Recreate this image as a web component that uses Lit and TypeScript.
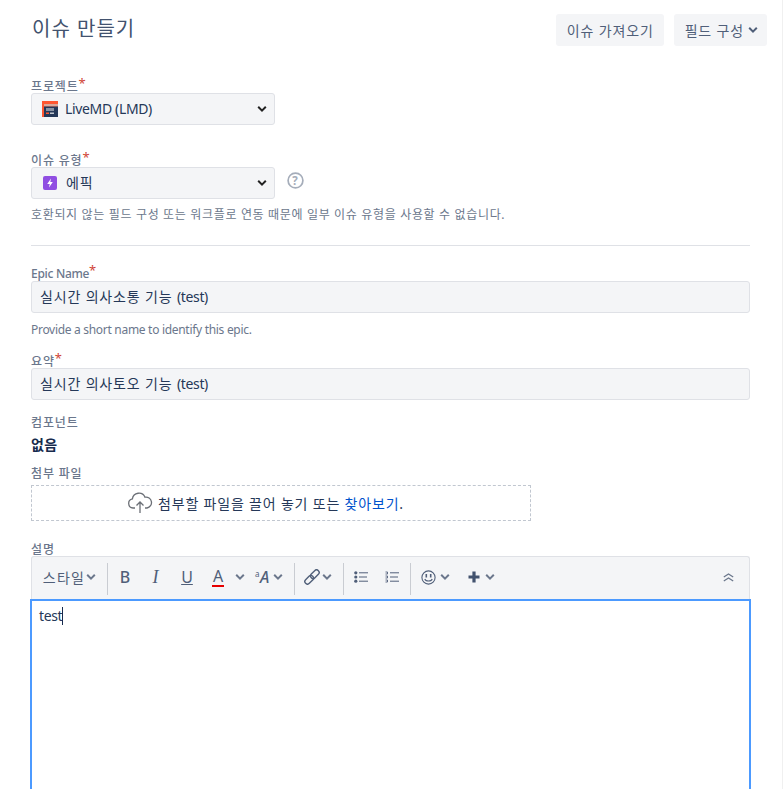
import { LitElement, html, css } from "lit";
import { customElement } from "lit/decorators.js";

const chev = () => html`<svg class="chev" width="10" height="8" viewBox="0 0 10 8"><path d="M1.2 1.8 5 5.6l3.8-3.8" fill="none" stroke="currentColor" stroke-width="2"/></svg>`;

@customElement("app-root")
export class AppRoot extends LitElement {
  static styles = css`
    :host { display: block; height: 789px; overflow: hidden; box-sizing: border-box; background: #fff; border-right: 1px solid #f0f0f0;
      font-family: "Noto Sans", "Noto Sans CJK KR", sans-serif; font-size: 14px; color: #172b4d; letter-spacing: .06em; }
    .lat { letter-spacing: -.025em; }
    .page { padding: 14px 15px 0 31px; }
    .head { display: flex; align-items: flex-start; height: 32px; }
    h1 { margin: 0; flex: 1; font-size: 20px; font-weight: 400; line-height: 30px; color: #42526e; letter-spacing: .05em; padding-left: 1px; }
    .btn { height: 32px; box-sizing: border-box; display: flex; align-items: center; gap: 5px; padding: 0 10px 0 11px; border-radius: 3px; background: #f4f5f7; color: #505f79; font-size: 14px; margin-left: 10px; }
    .btn:last-child { padding-right: 9px; gap: 4px; }
    .form { width: 719px; }
    label { display: block; height: 16px; font-size: 12px; line-height: 20px; font-weight: 500; color: #6b778c; }
    label.up { line-height: 18px; }
    label b { color: #d04437; font-weight: 400; font-size: 13px; line-height: 10px; vertical-align: 3px; letter-spacing: 0; }
    .select, .input { height: 32px; box-sizing: border-box; background: #f4f5f7; border: 1px solid #dfe1e6; border-radius: 3px; display: flex; align-items: center; }
    .select { width: 244px; padding: 0 7px 0 10px; gap: 7px; }
    .select span { flex: 1; font-size: 14px; color: #253858; line-height: 18px; padding-bottom: 1px; }
    .select .chev { color: #222; }
    .epic { margin: 0 2px 0 1px; }
    .input { padding: 0 8px 3px; color: #253858; }
    .row { display: flex; align-items: center; gap: 12px; }
    .help { color: #a5adba; display: block; margin-top: -5px; }
    .note { font-size: 12px; line-height: 16px; color: #6b778c; letter-spacing: .055em; }
    .note.lat { letter-spacing: -.025em; }
    .gap7 { margin-top: 8px; }
    .gap8 { margin-top: 9px; }
    hr { border: 0; border-top: 1px solid #dfe1e6; margin: 22px 0 19px; }
    .m31 { margin-top: 31px; } .m26 { margin-top: 26px; } .m13 { margin-top: 14px; } .m14 { margin-top: 13px; } .m11 { margin-top: 9px; } .m19 { margin-top: 19px; }
    .none { font-weight: 600; line-height: 20px; margin-top: 6px; color: #172b4d; letter-spacing: .02em; }
    .drop { width: 500px; height: 36px; box-sizing: border-box; border: 1px dashed #c1c7d0; display: flex; align-items: center; padding-left: 95px; gap: 5px; font-size: 14px; color: #253858; margin-top: 5px; letter-spacing: .058em; }
    .drop a { color: #0052cc; }
    .toolbar { height: 44px; box-sizing: border-box; background: #f4f5f7; border: 1px solid #dfe1e6; border-bottom: 0; border-radius: 3px 3px 0 0; display: flex; align-items: center; color: #505f79; }
    .sep { width: 1px; height: 32px; background: #c9ccd2; flex: none; }
    .t { display: flex; align-items: center; justify-content: center; color: #505f79; flex: none; margin-top: -3px; }
    .t .chev { color: #6b778c; }
    .editor { height: 220px; box-sizing: border-box; border: 2px solid #4c9aff; margin: -1px -1px 0; padding: 5px 7px; line-height: 20px; color: #253858; letter-spacing: -.025em; }
    .caret { display: inline-block; width: 1px; height: 18px; background: #172b4d; vertical-align: -4px; }
    .bold, .under, .acol { font-size: 16px; line-height: 18px; letter-spacing: 0; }
    .bold { font-weight: 500; }
    .ital { font-style: italic; font-family: "Liberation Serif", serif; font-size: 18px; }
    .under { text-decoration: underline; }
    .acol { border-bottom: 2px solid #e60000; line-height: 17px; padding: 0 1px; }
    .styl { width: 75px; gap: 1px; font-size: 14px; letter-spacing: .09em; }
    .wb { width: 34px; } .wi { width: 28px; } .wu { width: 34px; } .wa { width: 28px; } .wc { width: 16px; }
    .waa { width: 46px; padding-left: 7px; box-sizing: border-box; justify-content: flex-start; letter-spacing: 0; }
    .aa { display: flex; width: 18px; line-height: 16px; }
    .tinyA { font-size: 8px; line-height: 10px; width: 5px; }
    .bigA { font-size: 16px; font-style: italic; font-weight: 500; }
    .wl { width: 48px; padding-left: 9px; box-sizing: border-box; justify-content: flex-start; gap: 2px; }
    .w32 { width: 34px; } .w30 { width: 28px; } .w4 { width: 4px; }
    .w49 { width: 49px; gap: 4px; }
    .w44 { width: 42px; gap: 5px; }
    .grow { flex: 1; }
    .w40 { width: 40px; padding-right: 1px; box-sizing: border-box; }
    .q { font-size: 11.5px; font-weight: 700; font-family: "Noto Sans", sans-serif; fill: currentColor; }
  `;

  render() {
    return html`<div class="page">
      <div class="head"><h1>이슈 만들기</h1>
        <div class="btn">이슈 가져오기</div>
        <div class="btn">필드 구성 ${chev()}</div>
      </div>
      <div class="form">
        <label class="m31">프로젝트<b>*</b></label>
        <div class="select">
          <svg width="16" height="16" viewBox="0 0 16 16"><rect width="16" height="16" fill="#ff5630"/><rect x="2" y="3" width="14" height="2.5" fill="#d9a89a"/><rect x="2" y="5.5" width="14" height="10.5" fill="#253858"/><rect x="4" y="7" width="8" height="3" fill="#8993a4"/><rect x="4" y="11.5" width="3" height="1.5" fill="#ff5630"/><rect x="8" y="11.5" width="4" height="1.5" fill="#c1c7d0"/></svg>
          <span class="lat">LiveMD (LMD)</span>${chev()}
        </div>
        <label class="m26">이슈 유형<b>*</b></label>
        <div class="row">
          <div class="select">
            <svg class="epic" width="14" height="14" viewBox="0 0 14 14"><rect width="14" height="14" rx="2" fill="#904ee2"/><path d="M8 2.5 4.2 8h2.5L6 11.5 9.8 6H7.3z" fill="#fff"/></svg>
            <span>에픽</span>${chev()}
          </div>
          <svg class="help" width="17" height="17" viewBox="0 0 17 17"><circle cx="8.5" cy="8.5" r="7.4" fill="none" stroke="currentColor" stroke-width="1.7"/><text class="q" x="8.5" y="12.6" text-anchor="middle">?</text></svg>
        </div>
        <div class="note gap7">호환되지 않는 필드 구성 또는 워크플로 연동 때문에 일부 이슈 유형을 사용할 수 없습니다.</div>
        <hr />
        <label class="up"><span class="lat">Epic Name</span><b>*</b></label>
        <div class="input"><div>실시간 의사소통 기능 <span class="lat">(test)</span></div></div>
        <div class="note gap8 lat">Provide a short name to identify this epic.</div>
        <label class="m13">요약<b>*</b></label>
        <div class="input"><div>실시간 의사토오 기능 <span class="lat">(test)</span></div></div>
        <label class="m14">컴포넌트</label>
        <div class="none">없음</div>
        <label class="m11">첨부 파일</label>
        <div class="drop">
          <svg width="26" height="22" viewBox="0 0 26 22" fill="none" stroke="#6b6f76" stroke-width="1.3"><path d="M8 16H6a4.6 4.6 0 0 1-.6-9.1A6.6 6.6 0 0 1 18 5.2 5.4 5.4 0 0 1 20 16h-2"/><path d="M13 21V10M9.5 13.5 13 10l3.5 3.5"/></svg>
          <div>첨부할 파일을 끌어 놓기 또는 <a>찾아보기</a>.</div>
        </div>
        <label class="m19">설명</label>
        <div class="toolbar">
          <div class="t styl">스타일 ${chev()}</div>
          <div class="sep"></div>
          <div class="t bold wb">B</div>
          <div class="t ital wi">I</div>
          <div class="t under wu">U</div>
          <div class="t wa"><span class="acol">A</span></div>
          <div class="t wc">${chev()}</div>
          <div class="t waa"><div class="aa"><span class="tinyA">a</span><span class="bigA">A</span></div>${chev()}</div>
          <div class="sep"></div>
          <div class="t wl"><svg width="16" height="16" viewBox="0 0 16 16" fill="none" stroke="#505f79" stroke-width="1.4"><g transform="rotate(-45 8 8)"><rect x="-1" y="5.4" width="10" height="5.2" rx="2.6"/><rect x="7" y="5.4" width="10" height="5.2" rx="2.6"/></g></svg>${chev()}</div>
          <div class="sep"></div>
          <div class="t w32"><svg width="14" height="12" viewBox="0 0 14 12"><circle cx="1.8" cy="1.8" r="1.6" fill="#505f79"/><circle cx="1.8" cy="6" r="1.6" fill="#505f79"/><circle cx="1.8" cy="10.2" r="1.6" fill="#505f79"/><path d="M5 1.8h9M5 6h8M5 10.2h9" stroke="#505f79"/></svg></div>
          <div class="t w30"><svg width="14" height="12" viewBox="0 0 14 12"><path d="M.5 1h2v2H.5M.5 5h2v2H.5M.5 9h2v2H.5" fill="none" stroke="#505f79" stroke-width=".9"/><path d="M5 1.8h9M5 6h8M5 10.2h9" stroke="#505f79"/></svg></div>
          <div class="t w4"></div>
          <div class="sep"></div>
          <div class="t w49"><svg width="15" height="15" viewBox="0 0 15 15" fill="none" stroke="#505f79" stroke-width="1.1"><circle cx="7.5" cy="7.5" r="6.6"/><path d="M5.3 4v3.4M9.7 4v3.4" stroke-width="1.6"/><path d="M3.8 9c.8 2.6 6.6 2.6 7.4 0"/></svg>${chev()}</div>
          <div class="t w44"><svg width="12" height="12" viewBox="0 0 12 12"><path d="M4.4.5h3.2v3.9h3.9v3.2H7.6v3.9H4.4V7.6H.5V4.4h3.9z" fill="#42526e"/></svg>${chev()}</div>
          <div class="grow"></div>
          <div class="t w40"><svg width="11" height="9" viewBox="0 0 11 9" fill="none" stroke="#6b778c" stroke-width="1.3"><path d="M.8 4 5.5 1l4.7 3M.8 8l4.7-3 4.7 3"/></svg></div>
        </div>
        <div class="editor">test<span class="caret"></span></div>
      </div>
    </div>`;
  }
}
